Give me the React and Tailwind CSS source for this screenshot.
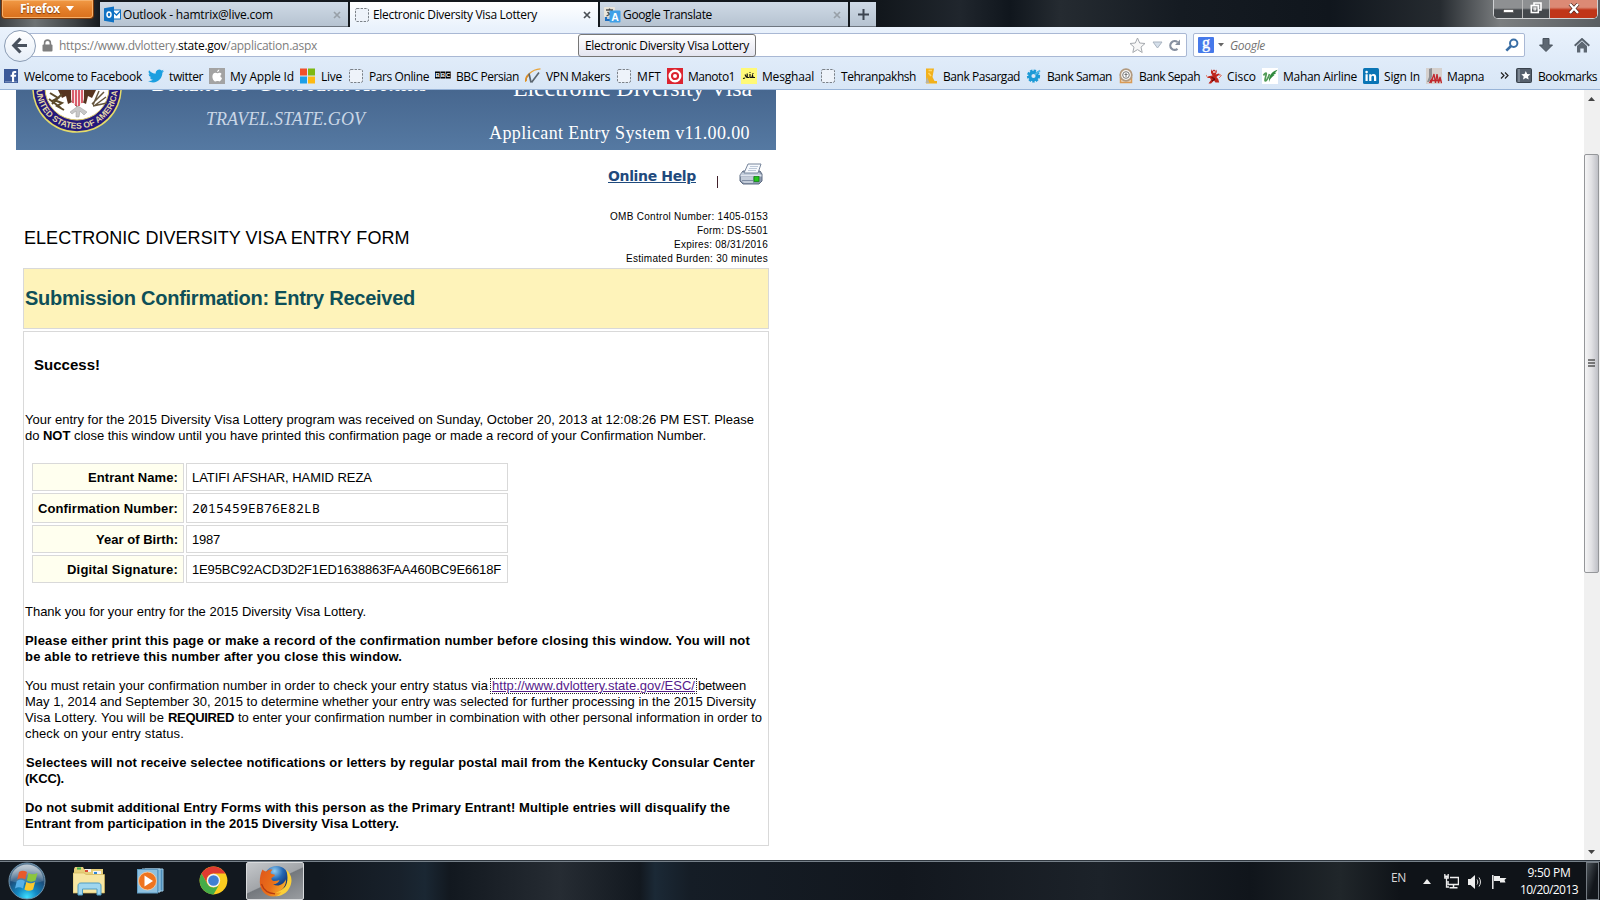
import React, { useLayoutEffect, useRef, useState } from "react";

/* Spreads a line of text over a given width by adjusting its tracking. */
function Fit({ w, className = "", children }) {
  const ref = useRef(null);
  const [ls, setLs] = useState(0);
  useLayoutEffect(() => {
    const el = ref.current;
    const n = el.textContent.length;
    setLs((w - el.getBoundingClientRect().width) / n);
  }, [w]);
  return (
    <span ref={ref} className={"inline-block whitespace-pre " + className} style={{ letterSpacing: ls + "px" }}>
      {children}
    </span>
  );
}

const Dashed = () => (
  <svg width="16" height="16" viewBox="0 0 16 16">
    <rect x="1.5" y="1.5" width="13" height="13" rx="1.5" fill="#eef3fa" stroke="#7b8188" strokeDasharray="2.4 1.2" />
  </svg>
);

const Facebook = () => (
  <svg width="16" height="16" viewBox="0 0 16 16">
    <rect x="1" y="1" width="14" height="14" fill="#3b5998" />
    <rect x="2" y="13" width="12" height="1.4" fill="#6d84b4" />
    <path d="M9 14V8.700H7.600V6.800H9V5.400C9 3.700 10 2.900 11.500 2.900h1.700v2h-1.100c-.7 0-1 .3-1 .9v1h2.100l-.3 1.900h-1.800V14z" fill="#fff" />
  </svg>
);

const Twitter = () => (
  <svg width="16" height="16" viewBox="0 0 24 24">
    <path fill="#1b9fe0" d="M24 4.600a10 10 0 0 1-2.800.8 5 5 0 0 0 2.100-2.700 10 10 0 0 1-3.100 1.200 4.900 4.900 0 0 0-8.400 4.500A14 14 0 0 1 1.700 3.200a4.900 4.900 0 0 0 1.500 6.500 4.900 4.900 0 0 1-2.200-.6 4.900 4.900 0 0 0 3.900 4.900 5 5 0 0 1-2.200.1 4.900 4.900 0 0 0 4.600 3.400A9.900 9.900 0 0 1 0 19.500a14 14 0 0 0 7.500 2.200c9.100 0 14.300-7.700 14-14.600A10 10 0 0 0 24 4.600z" />
  </svg>
);

const Apple = () => (
  <svg width="16" height="16" viewBox="0 0 16 16">
    <rect width="16" height="16" fill="#a3a3a3" />
    <path fill="#fff" d="M10.300 1.500c.1 1.300-.9 2.500-2.200 2.600-.1-1.200 1-2.500 2.200-2.600zM12.600 5.900c-1.700 1-1.600 3.300.4 4.200-.5 1.500-1.500 3.400-2.700 3.400-.8 0-1-.4-1.900-.4s-1.200.4-1.900.4C4.900 13.500 3.400 11 3.400 8.500c0-2.300 1.400-3.700 3-3.700.9 0 1.500.5 2.100.5s1.200-.6 2.300-.6c.7 0 1.400.4 1.800 1.200z" />
  </svg>
);

const Live = () => (
  <svg width="16" height="16" viewBox="0 0 16 16">
    <rect x="0" y="0.500" width="7" height="7" fill="#f0502a" />
    <rect x="8" y="0.500" width="7" height="7" fill="#7db813" />
    <rect x="0" y="8.500" width="7" height="7" fill="#1b9fe8" />
    <rect x="8" y="8.500" width="7" height="7" fill="#fdb913" />
  </svg>
);

const Bbc = () => (
  <svg width="16" height="16" viewBox="0 0 16 16">
    {[0, 5.400, 10.800].map((x) => <rect key={x} x={x} y="3.500" width="4.900" height="7" fill="#000" />)}
    <g fill="#fff" fontFamily="Liberation Sans" fontWeight="700" fontSize="6">
      <text x="0.400" y="9.200">B</text><text x="5.800" y="9.200">B</text><text x="11.100" y="9.200">C</text>
    </g>
  </svg>
);

const Vpn = () => (
  <svg width="16" height="16" viewBox="0 0 16 16" fill="none">
    <path d="M0.500 14C0.500 8 6 1.500 15.500 0.800" stroke="#e8a33a" strokeWidth="1.300" />
    <path d="M1 13c-.3-3 1-5 3-6.500" stroke="#d98d2a" strokeWidth="1.800" />
    <path d="M4 5.500l2 9M6.500 14.500L14 4.500" stroke="#5b6670" strokeWidth="1.700" />
  </svg>
);

const Manoto = () => (
  <svg width="16" height="16" viewBox="0 0 16 16">
    <rect width="16" height="16" fill="#dc2430" />
    <circle cx="8" cy="8" r="5.300" fill="none" stroke="#fff" strokeWidth="2.400" />
    <circle cx="8" cy="8" r="2" fill="#fff" />
  </svg>
);

const Mesghaal = () => (
  <svg width="16" height="16" viewBox="0 0 16 16">
    <rect width="16" height="16" fill="#fff977" />
    <path d="M14 9.500h-2l-.5-2-.6 2H9V6M8 9.500H6.200V5.500M5.500 9.500L4 6.500M2 10.500l2-.5M8.500 4.500h1M11.500 5.500h1" stroke="#111" strokeWidth="1.200" fill="none" />
  </svg>
);

const Pasargad = () => (
  <svg width="16" height="16" viewBox="0 0 16 16">
    <path d="M4 0.500h8l-.5 3-1 5.500 2 4h2.500v2.500H4z" fill="#f2b11c" />
    <path d="M5 9l2.500 6H3.500z" fill="#b9b4a2" /><path d="M6.500 2.500l3.500 0M6.500 5l2.500 3" stroke="#ffd766" strokeWidth="1.500" />
  </svg>
);

const Saman = () => (
  <svg width="16" height="16" viewBox="0 0 16 16">
    <circle cx="7.500" cy="8" r="5.300" fill="none" stroke="#1c9ad6" strokeWidth="2.600" strokeDasharray="2.300 1.200" />
    <circle cx="7.500" cy="8" r="3.700" fill="none" stroke="#1c9ad6" strokeWidth="3.200" />
    <path d="M9 6.500l5-4" stroke="#4fb7e6" strokeWidth="1.800" />
  </svg>
);

const Sepah = () => (
  <svg width="16" height="16" viewBox="0 0 16 16">
    <path d="M2.500 9v5.500h11V9" fill="#f3dcc0" stroke="#d99a55" strokeWidth="1.500" />
    <circle cx="8" cy="7" r="5.800" fill="#f8f5f1" stroke="#b29a7f" strokeWidth="1.800" />
    <circle cx="8" cy="7" r="3.300" fill="#fff" stroke="#777" strokeWidth="1" />
    <path d="M6.500 6.500h3M8 5v4" stroke="#777" />
  </svg>
);

const Cisco = () => (
  <svg width="16" height="16" viewBox="0 0 16 16">
    <path d="M5 1l1 2 2-1.500 2 1.500 1-1.500-.4 3-1 2 3-1 2 2-2-.3-2.200 1.800 1.800 2 1 3.500H9.500L8 12.500 5 15.500H2.500L5 12l-1-2H1l1.500-1.700 4-.8L5 5z" fill="#c0251b" />
    <path d="M7 4h2.500" stroke="#fff" strokeWidth="1.200" /><path d="M5.500 9.500l3 1M6 13l3-2" stroke="#5d0d0b" strokeWidth="1.200" />
    <path d="M13 6l2.500 1.500L13 10M0 7l2 3" stroke="#e07a68" fill="none" />
  </svg>
);

const Mahan = () => (
  <svg width="16" height="16" viewBox="0 0 16 16">
    <rect width="16" height="16" fill="#fff" />
    <path d="M1.500 7.500C2.500 5.500 4 4.500 4.300 5.300c.4 1-1.600 5.500-1.300 7.200.4 1.500 3-1.500 4.500-6.500" fill="none" stroke="#4f9a55" strokeWidth="1.700" />
    <path d="M7 14c-.5-6 2.500-10.500 8.500-12.200-.7 1.500-1.700 2.200-2.900 2.700l1.700.2c-1.300 1.500-2.400 1.900-3.500 2.100l1.700.3C10.500 9 8.500 10 7 14z" fill="#2f8a3d" />
  </svg>
);

const LinkedIn = () => (
  <svg width="16" height="16" viewBox="0 0 16 16">
    <rect width="16" height="16" rx="1.500" fill="#0a75b5" />
    <path d="M2.500 6.200h2.200v6.800H2.500zM3.600 2.800a1.300 1.300 0 1 1 0 2.600 1.300 1.300 0 0 1 0-2.600zM6.200 6.200h2.100v1c.5-.8 1.200-1.200 2.200-1.200 2.200 0 2.700 1.400 2.700 3.300V13H11V9.700c0-.9-.1-1.900-1.200-1.900S8.400 8.700 8.400 9.600V13H6.200z" fill="#fff" />
  </svg>
);

const Mapna = () => (
  <svg width="16" height="16" viewBox="0 0 16 16">
    <rect width="16" height="16" fill="#d5d0cd" />
    <path d="M3 1l3-1v9l-3 5H1l2-5z" fill="#8f8f92" />
    <path d="M5 15l3-9 1.500 9L11 6l1.500 9L14 9l1.500 6M3.500 15L7 9M4 12.500h11" stroke="#c1272d" strokeWidth="1.300" fill="none" />
  </svg>
);

const BOOKMARKS = [
  [Facebook, "Welcome to Facebook", 118], [Twitter, "twitter", 34], [Apple, "My Apple Id", 64],
  [Live, "Live", 21], [Dashed, "Pars Online", 60], [Bbc, "BBC Persian", 63], [Vpn, "VPN Makers", 64],
  [Dashed, "MFT", 24], [Manoto, "Manoto1", 47], [Mesghaal, "Mesghaal", 52], [Dashed, "Tehranpakhsh", 75],
  [Pasargad, "Bank Pasargad", 77], [Saman, "Bank Saman", 65], [Sepah, "Bank Sepah", 61], [Cisco, "Cisco", 29],
  [Mahan, "Mahan Airline", 74], [LinkedIn, "Sign In", 36], [Mapna, "Mapna", 37],
];

const OutlookIcon = () => (
  <svg width="17" height="17" viewBox="0 0 17 17">
    <rect x="8" y="4" width="8.500" height="9" fill="#fff" stroke="#0f72c4" />
    <path d="M8 5l4.500 4L16.500 5" fill="none" stroke="#0f72c4" strokeWidth="1.300" />
    <path d="M0 2.200L10 0.500v16L0 14.800z" fill="#0f72c4" />
    <ellipse cx="5" cy="8.600" rx="2" ry="2.600" fill="none" stroke="#fff" strokeWidth="1.500" />
  </svg>
);

const TranslateIcon = () => (
  <svg width="17" height="16" viewBox="0 0 17 16">
    <rect x="0" y="0" width="11" height="10" rx="1" fill="#e9e5da" />
    <path d="M2 3h7M5.500 1.500V3M8 3C7 6 5 8 2.500 9M3.500 5C5 7 6.500 8 8.500 8.500" stroke="#4d4d4d" strokeWidth="1.300" fill="none" />
    <path d="M1 10v4h5v-2H3v-2z" fill="#1d6fc0" />
    <rect x="5.500" y="3.500" width="11" height="12" rx="1" fill="#3fa0e8" />
    <text x="7.300" y="13.500" fontSize="10.500" fontWeight="700" fontFamily="Liberation Sans" fill="#fff">A</text>
  </svg>
);

const Close = ({ color }) => (
  <svg width="8" height="8" viewBox="0 0 8 8"><path d="M1 1l6 6M7 1L1 7" stroke={color} strokeWidth="1.700" /></svg>
);

function Tab({ icon, title, w, active, className }) {
  return (
    <div className={"flex h-[25px] items-center pl-1 pr-[7px] pt-px text-[12px] text-black " + (active ? "bg-gradient-to-b from-white to-[#eaf2fc] " : "border-b border-[#6e7680] bg-gradient-to-b from-[#cfdae6] to-[#b6c3d1] ") + className}>
      <span className="flex w-[19px] shrink-0">{icon}</span>
      <Fit w={w}>{title}</Fit>
      <span className="ml-auto"><Close color={active ? "#4a4f55" : "#98a0a8"} /></span>
    </div>
  );
}

function TabStrip() {
  return (
    <div className="flex h-[27px] items-start bg-[linear-gradient(90deg,#3c3f42_0,#6d7274_35px,#3d4144_75px,#15191e_100px,#12171c_880px,#20262d_960px,#10161d_1010px,#252b31_1060px,#151b22_1180px,#10161d_1330px,#262b30_1440px,#7b7e80_1500px,#5a5e62_1600px)]">
      <div className="ml-px flex h-[19px] w-[93px] items-center rounded-b-[4px] border border-t-0 border-[#7c3a0b] bg-gradient-to-b from-[#f19a45] via-[#e4802b] to-[#d9701c] pb-px pl-[18px] font-bold text-white shadow-[inset_0_0_0_1px_#f6b16b]">
        <Fit w={40} className="text-[12px] leading-4 [text-shadow:0_1px_1px_#7c3a0b]">Firefox</Fit>
        <svg className="ml-[6px]" width="8" height="5" viewBox="0 0 8 5"><path d="M0 0h8L4 5z" fill="#fff" /></svg>
      </div>
      <div className="ml-[6px] mt-[2px] flex gap-[2px]">
        <Tab className="w-[248px]" icon={<OutlookIcon />} title="Outlook - hamtrix@live.com" w={150} />
        <Tab active className="w-[248px]" icon={<Dashed />} title="Electronic Diversity Visa Lottery" w={164} />
        <Tab className="w-[248px]" icon={<TranslateIcon />} title="Google Translate" w={89} />
        <div className="flex h-[25px] w-[26px] items-center justify-center border-b border-[#6e7680] bg-gradient-to-b from-[#cfdae6] to-[#b6c3d1]">
          <svg className="mt-px" width="11" height="11" viewBox="0 0 11 11"><path d="M5.500 0v11M0 5.500h11" stroke="#3d4550" strokeWidth="2" /></svg>
        </div>
      </div>
      <div className="ml-auto mr-[2px] flex h-[19px] w-[105px] overflow-hidden rounded-b-[5px] border border-t-0 border-[#d0d2d4] bg-[#222]">
        <div className="flex w-[29px] items-end justify-center border-r border-[#bbb] bg-gradient-to-b from-[#8e9092] from-45% to-[#44484c] to-55% pb-[5px]">
          <svg width="11" height="4"><rect x="0.500" y="0.500" width="10" height="3" fill="#fff" stroke="#444" strokeWidth=".6" /></svg>
        </div>
        <div className="flex w-[27px] items-center justify-center border-r border-[#bbb] bg-gradient-to-b from-[#8e9092] from-45% to-[#44484c] to-55% pb-[2px]">
          <svg width="12" height="12" viewBox="0 0 12 12" fill="none" stroke="#fff" strokeWidth="1.600"><path d="M4 3V1h7v7H9" /><rect x="1.300" y="3.500" width="7" height="7" /><rect x="4" y="6" width="1.800" height="2" strokeWidth="1" /></svg>
        </div>
        <div className="flex grow items-center justify-center bg-gradient-to-b from-[#dc8a75] from-40% to-[#c03518] to-55% pb-[2px]">
          <svg width="12" height="11" viewBox="0 0 12 11"><path d="M2 1l8 9M10 1L2 10" stroke="#4a2018" strokeWidth="3.600" /><path d="M2 1l8 9M10 1L2 10" stroke="#fff" strokeWidth="2.400" /></svg>
        </div>
      </div>
    </div>
  );
}

function NavBar() {
  return (
    <div className="relative flex h-[35px] items-center bg-gradient-to-b from-[#eaf2fc] to-[#dfebf9] text-[12px]">
      <div className="z-10 ml-1 mt-[2px] flex h-8 w-8 shrink-0 items-center justify-center rounded-full border border-[#8b9cb4] bg-gradient-to-b from-white to-[#e6eef8]">
        <svg className="-ml-px" width="17" height="17" viewBox="0 0 17 17" fill="none" stroke="#49525e" strokeWidth="3.200"><path d="M9.500 1.500L2.800 8.500l6.700 7M3 8.500h13" /></svg>
      </div>
      <div className="-ml-2 mt-px flex h-6 w-[1159px] items-center rounded-r-[2px] border border-[#a9b8d4] bg-white pl-[13px] pr-[5px] text-[#7d7d7d]">
        <svg width="11" height="13" viewBox="0 0 11 13"><path d="M2.600 6V4a2.900 2.900 0 0 1 5.800 0v2" fill="none" stroke="#7e7e7e" strokeWidth="1.600" /><rect x="0.500" y="5.500" width="10" height="7" rx="1" fill="#7e7e7e" /></svg>
        <Fit w={258} className="ml-[6px] mt-[2px]">https://www.dvlottery.<span className="text-black">state.gov</span>/application.aspx</Fit>
        <div className="ml-auto flex items-center">
          <svg width="17" height="17" viewBox="0 0 17 17"><path d="M8.500 1l2.200 5 5.300.5-4 3.600 1.200 5.400-4.700-2.900-4.700 2.900L5 10.100 1 6.500 6.300 6z" fill="#f7f7f7" stroke="#a5a9ae" /></svg>
          <svg className="ml-[6px]" width="11" height="8" viewBox="0 0 11 8"><path d="M1 1h9L5.500 7z" fill="#d5dfea" stroke="#aab4c0" /></svg>
          <svg className="ml-[5px]" width="13" height="13" viewBox="0 0 13 13"><path d="M9.500 9.800A4.400 4.400 0 1 1 9.500 3" fill="none" stroke="#8790a0" strokeWidth="2.200" /><path d="M7 6h5V0.500z" fill="#8790a0" /></svg>
        </div>
      </div>
      <div className="ml-[6px] mt-px flex h-6 w-[332px] items-center rounded-[2px] border border-[#a9b8d4] bg-white pl-1 pr-[5px]">
        <svg width="16" height="16" viewBox="0 0 16 16"><rect width="16" height="16" rx="1" fill="#4679ea" /><text x="4" y="11" fontFamily="Liberation Serif" fontSize="16" fill="#fff" stroke="#fff" strokeWidth=".4">g</text></svg>
        <svg className="ml-1" width="6" height="4" viewBox="0 0 6 4"><path d="M0 0h6L3 3.500z" fill="#666" /></svg>
        <Fit w={35} className="ml-[6px] mt-[2px] italic text-[#737373]">Google</Fit>
        <svg className="ml-auto" width="14" height="14" viewBox="0 0 14 14" fill="none"><circle cx="8.700" cy="5.200" r="3.700" stroke="#3a6ea5" strokeWidth="2" /><path d="M6 8L1.300 12.700" stroke="#3a6ea5" strokeWidth="2.600" /></svg>
      </div>
      <svg className="ml-[14px] mt-px" width="14" height="14" viewBox="0 0 14 14"><path d="M4 .5h6v6.500h3.500L7 13.500.5 7H4z" fill="#5d6772" stroke="#49525d" /></svg>
      <svg className="ml-[21px] mt-px" width="16" height="15" viewBox="0 0 16 15"><path d="M.7 7.800L8 1l7.300 6.800" fill="none" stroke="#56606b" strokeWidth="1.900" /><path d="M3 8l5-4.700L13 8v6.500H9.700v-4H6.300v4H3z" fill="#5d6772" /></svg>
      <div className="absolute left-[578px] top-[7px] z-20 flex h-[23px] w-[178px] items-center rounded-[3px] border border-[#767676] bg-gradient-to-b from-white to-[#e4e5f0] pl-[6px] pt-px">
        <Fit w={164}>Electronic Diversity Visa Lottery</Fit>
      </div>
    </div>
  );
}

function BookmarksBar() {
  return (
    <div className="flex h-[28px] items-center gap-[6px] border-b border-[#98b4d8] bg-gradient-to-b from-[#dfebf9] to-[#d8e6f6] pl-[3px] text-[12px] text-black">
      {BOOKMARKS.map(([Icon, label, w]) => (
        <div key={label} className="flex items-center gap-[5px]">
          <Icon />
          <Fit w={w} className="mt-[2px]">{label}</Fit>
        </div>
      ))}
      <svg className="ml-[10px]" width="9" height="7" viewBox="0 0 9 7" fill="none" stroke="#222" strokeWidth="1.200"><path d="M1 .5l3 3-3 3M5 .5l3 3-3 3" /></svg>
      <div className="ml-[1px] flex items-center gap-[6px]">
        <svg width="16" height="15" viewBox="0 0 16 15"><rect x=".5" y=".5" width="15" height="14" rx="1" fill="#56606d" stroke="#39424d" /><rect x="2" y="1" width="2" height="13" fill="#7c8692" /><path d="M9.800 3l1.400 3 3.200.3-2.400 2.100.7 3.200-2.900-1.700-2.800 1.700.7-3.200-2.400-2.100L8.500 6z" fill="#fff" /></svg>
        <Fit w={59} className="mt-[2px]">Bookmarks</Fit>
      </div>
    </div>
  );
}

const Seal = () => (
  <svg className="shrink-0" width="92" height="60" viewBox="31 90 92 60">
    <circle cx="77" cy="88" r="44.800" fill="#e6dc6a" />
    <circle cx="77" cy="88" r="43.300" fill="#24197c" />
    <circle cx="77" cy="88" r="32" fill="#fff" stroke="#d8c766" strokeWidth="1" />
    <path id="sealArc" d="M36.300 88A40.700 40.700 0 0 0 117.700 88" fill="none" />
    <text fontFamily="Liberation Sans" fontWeight="700" fontSize="8.500" fill="#e3d8a8">
      <textPath href="#sealArc" startOffset="2" textLength="123">UNITED STATES OF AMERICA</textPath>
    </text>
    <path d="M58 90h38l-4 8-4-2-2 8-4-2-5 5-5-5-4 2-2-8-4 2z" fill="#55331f" />
    <path d="M71 90h13v8c0 5-3 7-6.500 8-3.500-1-6.500-3-6.500-8z" fill="#f7e9ea" />
    <path d="M73 90v13M76 90v16M79 90v16M82 90v13" stroke="#cf3346" strokeWidth="1.500" />
    <path d="M78 106l-8 6 2 2 4-3 0 6 3 0 1-6 4 4 3-3z" fill="#c8c8c8" stroke="#999" strokeWidth=".5" />
    <path d="M50 93l8 5-4 2 8 3-5 3 7 4M52 104l10-10M49 99l12 9" stroke="#5c4a2a" strokeWidth="2" fill="none" />
    <path d="M104 92l-12 12M106 97l-12 9M99 91l-6 14M107 103l-14 3" stroke="#66573f" strokeWidth="1.500" fill="none" />
  </svg>
);

const Banner = () => (
  <div className="relative ml-4 h-[60px] w-[760px] overflow-hidden bg-gradient-to-b from-[#47678f] to-[#5579a2] font-['Liberation_Serif',serif] text-white">
    <div className="flex">
      <div className="ml-[15px]"><Seal /></div>
    </div>
    <div className="absolute left-[136px] top-[-16px] leading-[20px]">
      <Fit w={276} className="text-[20px] font-bold [font-variant:small-caps]">Bureau of Consular Affairs</Fit>
    </div>
    <div className="absolute left-[190px] top-[17px] leading-[24px] text-[#c9d6e6]">
      <Fit w={159} className="text-[18px] italic">TRAVEL.STATE.GOV</Fit>
    </div>
    <div className="absolute left-[497px] top-[-15px] leading-[26px]">
      <Fit w={239} className="text-[24px]">Electronic Diversity Visa</Fit>
    </div>
    <div className="absolute left-[473px] top-[31px] leading-[24px]">
      <Fit w={261} className="text-[18px]">Applicant Entry System v11.00.00</Fit>
    </div>
  </div>
);

const Printer = () => (
  <svg width="24" height="22" viewBox="0 0 24 22">
    <path d="M4 8L1 12v6l3 3h16l3-3v-7l-2-3z" fill="#8b98ad" stroke="#5f6c82" />
    <path d="M1.500 12.500h21" stroke="#dfe5ee" strokeWidth="2" />
    <path d="M3 9.500h17l2 2.500H1.500z" fill="#c3cddb" />
    <path d="M9 1h13l-3 9H5z" fill="#f6f9fd" stroke="#77859b" />
    <path d="M11 3.500h8M10 5.500h8M9 7.500h8" stroke="#bcc8d8" />
    <path d="M2 14h12v6H5l-3-2.500z" fill="#c3ccd9" />
    <path d="M3 17.500h11" stroke="#8290a6" />
    <rect x="15" y="13.500" width="5" height="5" fill="#25c51c" stroke="#0d7c10" strokeWidth=".7" />
  </svg>
);

const ROWS = [
  ["Entrant Name:", 90, "LATIFI AFSHAR, HAMID REZA", 180, "h-[28px]", ""],
  ["Confirmation Number:", 140, "2015459EB76E82LB", 128, "h-[30px]", "-mt-[2px] font-['Noto_Sans_Mono','DejaVu_Sans_Mono',monospace] text-[13px]"],
  ["Year of Birth:", 82, "1987", 28, "h-[28px]", ""],
  ["Digital Signature:", 111, "1E95BC92ACD3D2F1ED1638863FAA460BC9E6618F", 309, "h-[28px]", ""],
];

function EntryPage() {
  return (
    <div className="flex h-[770px] overflow-hidden bg-white text-black">
      <div className="w-[1584px]">
        <Banner />
        <div className="flex h-[54px] w-[776px] justify-end pr-[13px]">
          <Fit w={88} className="mt-[16px] font-['DejaVu_Sans',sans-serif] text-[14px] font-bold leading-[20px] text-[#1f4a7d] underline">Online Help</Fit>
          <span className="ml-[21px] mt-[26px] h-3 w-px bg-[#40202a]" />
          <span className="ml-[21px] mt-[13px]"><Printer /></span>
        </div>
        <div className="flex h-[64px] w-[768px] justify-between pl-6 font-['Liberation_Sans',Arial,sans-serif]">
          <Fit w={385.5} className="mt-[23px] text-[18px] leading-[22px]">ELECTRONIC DIVERSITY VISA ENTRY FORM</Fit>
          <div className="mt-[6px] flex flex-col items-end text-[10px] leading-[14px]">
            <Fit w={158}>OMB Control Number: 1405-0153</Fit>
            <Fit w={71}>Form: DS-5501</Fit>
            <Fit w={94}>Expires: 08/31/2016</Fit>
            <Fit w={142}>Estimated Burden: 30 minutes</Fit>
          </div>
        </div>
        <div className="ml-[23px] flex h-[61px] w-[746px] items-center border border-[#d9d9d9] bg-[#fef3ba] pb-[2px] pl-px font-['Liberation_Sans',Arial,sans-serif] text-[20px] font-bold leading-6 text-[#0e4f58]">
          <Fit w={390}>Submission Confirmation: Entry Received</Fit>
        </div>
        <div className="ml-[23px] mt-[2px] flex h-[515px] w-[746px] flex-col items-start border border-[#d9d9d9] pl-px font-['Liberation_Sans',Arial,sans-serif] text-[13px] leading-[16px]">
          <Fit w={66} className="ml-[9px] mt-[24px] text-[15px] font-bold leading-[18px]">Success!</Fit>
          <div className="mt-[38px] flex flex-col items-start">
            <Fit w={729}>Your entry for the 2015 Diversity Visa Lottery program was received on Sunday, October 20, 2013 at 12:08:26 PM EST. Please</Fit>
            <Fit w={681}>do <b>NOT</b> close this window until you have printed this confirmation page or made a record of your Confirmation Number.</Fit>
          </div>
          <div className="ml-[7px] mt-[19px] flex flex-col gap-[2px]">
            {ROWS.map(([label, lw, value, vw, h, font]) => (
              <div key={label} className={"flex gap-[2px] " + h}>
                <div className="flex w-[152px] items-center justify-end border border-[#d9d9d9] bg-[#ffffef] pr-[5px] pt-[2px] font-bold"><Fit w={lw}>{label}</Fit></div>
                <div className="flex w-[322px] items-center border border-[#d9d9d9] pl-[5px] pt-[2px]"><Fit w={vw} className={font}>{value}</Fit></div>
              </div>
            ))}
          </div>
          <Fit w={341} className="mt-[21px]">Thank you for your entry for the 2015 Diversity Visa Lottery.</Fit>
          <div className="mt-[13px] flex flex-col items-start font-bold">
            <Fit w={725}>Please either print this page or make a record of the confirmation number before closing this window. You will not</Fit>
            <Fit w={377}>be able to retrieve this number after you close this window.</Fit>
          </div>
          <div className="mt-[13px] flex flex-col items-start">
            <div className="flex h-4">
              <Fit w={463}>You must retain your confirmation number in order to check your entry status via</Fit>
              <span className="ml-[2px] h-4 border border-dotted border-[#222] px-px leading-[14px] text-[#551a8b]"><Fit w={203} className="underline">http://www.dvlottery.state.gov/ESC/</Fit></span>
              <Fit w={48} className="ml-px">between</Fit>
            </div>
            <Fit w={731}>May 1, 2014 and September 30, 2015 to determine whether your entry was selected for further processing in the 2015 Diversity</Fit>
            <div className="flex">
              <Fit w={139}>Visa Lottery. You will be</Fit>
              <Fit w={66} className="ml-1 font-bold">REQUIRED</Fit>
              <Fit w={524} className="ml-1">to enter your confirmation number in combination with other personal information in order to</Fit>
            </div>
            <Fit w={159}>check on your entry status.</Fit>
          </div>
          <div className="mt-[13px] flex flex-col items-start font-bold">
            <Fit w={729} className="ml-px">Selectees will not receive selectee notifications or letters by regular postal mail from the Kentucky Consular Center</Fit>
            <Fit w={39}>(KCC).</Fit>
          </div>
          <div className="mt-[13px] flex flex-col items-start font-bold">
            <Fit w={705}>Do not submit additional Entry Forms with this person as the Primary Entrant! Multiple entries will disqualify the</Fit>
            <Fit w={374}>Entrant from participation in the 2015 Diversity Visa Lottery.</Fit>
          </div>
        </div>
      </div>
      <div className="flex w-4 flex-col items-center bg-[#f0f0f0] pr-px">
        <svg className="mt-[7px]" width="7" height="4" viewBox="0 0 7 4"><path d="M0 4h7L3.500 0z" fill="#444" /></svg>
        <div className="mt-[53px] flex h-[419px] w-[15px] items-center justify-center rounded-[2px] border border-[#95979a] bg-gradient-to-r from-[#f5f5f6] via-[#e1e1e4] to-[#bfc0c6]">
          <svg className="-mt-px" width="7" height="8" viewBox="0 0 7 8"><path d="M0 1h7M0 4h7M0 7h7" stroke="#555" strokeWidth="1.300" /></svg>
        </div>
        <svg className="mb-[6px] mt-auto" width="7" height="4" viewBox="0 0 7 4"><path d="M0 0h7L3.500 4z" fill="#444" /></svg>
      </div>
    </div>
  );
}

const StartOrb = () => (
  <svg width="38" height="38" viewBox="0 0 38 38">
    <defs>
      <radialGradient id="orb" cx=".5" cy=".95" r=".8"><stop offset="0" stopColor="#3fe0ff" /><stop offset=".35" stopColor="#1389c4" /><stop offset=".75" stopColor="#1c4d7a" /><stop offset="1" stopColor="#55748e" /></radialGradient>
      <linearGradient id="orbTop" x1="0" y1="0" x2="0" y2="1"><stop offset="0" stopColor="#fff" stopOpacity=".65" /><stop offset="1" stopColor="#fff" stopOpacity=".1" /></linearGradient>
    </defs>
    <circle cx="19" cy="19" r="18" fill="url(#orb)" stroke="#6f93ac" />
    <path d="M2.500 19a16.500 16.500 0 0 1 33 0c-8 3-24 3-33 0z" fill="url(#orbTop)" />
    <path d="M11 10c2.500-1.800 5-1.800 8 0l-1.800 7.500c-2.700-1.700-5-1.700-8 0z" fill="#e8592b" />
    <path d="M20.500 11c3 1.600 5.500 1.600 9 0l-2 7.500c-3 1.600-5.800 1.500-8.700 0z" fill="#8cc63e" />
    <path d="M8.800 19c2.700-1.700 5.300-1.600 8 0L15 26.500c-3-1.700-5.200-1.700-8 0z" fill="#57b0e8" />
    <path d="M18.300 20c3 1.700 5.800 1.600 8.800 0l-2 7.500c-3 1.700-5.800 1.600-8.700 0z" fill="#fcc92d" />
  </svg>
);

const Explorer = () => (
  <svg width="32" height="30" viewBox="0 0 32 30">
    <path d="M1 3l1-2h8l1 2h19v24H1z" fill="#e7cf7a" />
    <rect x="4" y="1.500" width="4" height="2" fill="#3eb34a" /><rect x="12" y="3" width="6" height="3" fill="#f3f3f3" /><rect x="12" y="4" width="3" height="2" fill="#d94b34" /><rect x="20" y="5" width="8" height="3" fill="#f3f3f3" /><rect x="21" y="6" width="3" height="2" fill="#2f87d4" />
    <path d="M0 7h11l2 1.500h18.500V27H0z" fill="#f7e6a2" stroke="#d2b65c" strokeWidth=".7" />
    <path d="M5 29V20c0-2 1-3 3-3h17c2 0 3 1 3 3v9h-4v-6H9.500v6z" fill="#9fd6ef" stroke="#4e9cc4" />
  </svg>
);

const MediaPlayer = () => (
  <svg width="27" height="26" viewBox="0 0 27 26">
    <path d="M8 1h18v22H8z" fill="#4d8db9" stroke="#9cc9e5" /><path d="M5 1h18v23H5z" fill="#6ba7cf" stroke="#a8d1ea" />
    <rect x=".5" y="1.500" width="20" height="23.500" fill="#8fc1e0" stroke="#5f9cc4" />
    <circle cx="10.500" cy="13" r="9" fill="#ee7420" stroke="#fbd1a5" strokeWidth=".8" />
    <path d="M7.500 7.500v11l8.500-5.500z" fill="#fff" />
  </svg>
);

const Chrome = () => (
  <svg width="29" height="29" viewBox="0 0 48 48">
    <circle cx="24" cy="24" r="23" fill="#fbcc1f" />
    <path d="M4.100 12.500A23 23 0 0 1 43.900 12.500H24A11.500 11.500 0 0 0 14 29.700z" fill="#df3b30" />
    <path d="M4.100 12.500A23 23 0 0 0 24 47L34 29.700A11.500 11.500 0 0 1 14 29.700z" fill="#45ac48" />
    <circle cx="24" cy="24" r="11" fill="#f3f3f3" /><circle cx="24" cy="24" r="8.800" fill="#3f7fd2" />
  </svg>
);

const FirefoxIcon = () => (
  <svg width="33" height="32" viewBox="0 0 33 32">
    <defs>
      <radialGradient id="globe" cx=".42" cy=".2" r=".75"><stop offset="0" stopColor="#8fcdf2" /><stop offset=".45" stopColor="#2468b4" /><stop offset="1" stopColor="#0f2560" /></radialGradient>
      <linearGradient id="fox" x1="0" y1="0" x2="1" y2=".5"><stop offset="0" stopColor="#e0561a" /><stop offset=".6" stopColor="#e9701a" /><stop offset="1" stopColor="#f7a928" /></linearGradient>
    </defs>
    <circle cx="17.500" cy="13.500" r="12.500" fill="url(#globe)" />
    <path d="M27 4.500c4.500 3.500 6.500 9 5 14.500-1.800 7-7.500 12-15 12.300l-1-4.800c6-.3 10.500-3.500 11.800-8.500 1.200-4.700.7-9-.8-13.500z" fill="#fbcf38" />
    <path d="M3.500 4.500c1 1 2 1.900 3.800 2C9.500 4.800 11.500 4.300 13.500 4.800c-1.700 1.300-2.300 2.600-1.700 3.600 1 .9 3.400.5 4.200 1.600-.5 1.600-3 2-3.700 3.500.6 3.500 5 2.700 8.200 1.500-.8 2.800-3.500 4.300-6.500 4.200 5 2.900 10.500.5 13-5 .5 6-3.500 12-10.500 13.500-1 0 4 0 6-.8-2 3-5 4.600-8.500 4.600C7 31.500.8 25.500.8 17 .8 12 1.700 8 3.500 4.500z" fill="url(#fox)" />
    <path d="M2.500 19c2 6 7 9.500 13.500 9.800" stroke="#b63c12" strokeWidth="1.300" fill="none" />
  </svg>
);

function Taskbar() {
  return (
    <div className="flex h-10 items-center border-t border-[#303840] bg-[linear-gradient(90deg,#12181f_0,#12181f_320px,#18212b_400px,#1a2733_425px,#12181f_450px,#262c33_560px,#12181f_640px,#1b2936_655px,#151d26_690px,#12171e_900px,#1c2229_1100px,#10151b_1250px,#20262a_1340px,#0f1318_1400px)] text-white shadow-[inset_0_1px_0_#77818a]">
      <div className="ml-2"><StartOrb /></div>
      <div className="ml-[27px]"><Explorer /></div>
      <div className="ml-[32px]"><MediaPlayer /></div>
      <div className="ml-[35px]"><Chrome /></div>
      <div className="ml-[18px] flex h-[38px] w-[58px] items-center justify-center rounded-[2px] border border-[#d9dbdd] bg-[linear-gradient(155deg,#c5c8cb_0,#a2a5a9_48%,#74787d_50%,#9a9da1_100%)]"><FirefoxIcon /></div>
      <div className="ml-auto flex h-full items-center">
        <Fit w={15} className="mb-[5px] text-[12px] text-[#d8d8d8]">EN</Fit>
        <svg className="ml-[17px] mt-[2px]" width="8" height="5" viewBox="0 0 8 5"><path d="M0 5h8L4 0z" fill="#eee" /></svg>
        <svg className="ml-[13px] mt-[2px]" width="15" height="15" viewBox="0 0 15 15" fill="none" stroke="#eee"><path d="M6 3.500h8.500v7H4V7M9.500 11v2.500M5.500 13.700h8" strokeWidth="1.500" /><path d="M.8 0v4h3.400V0M2.500 4v9H5" strokeWidth="1.300" /><path d="M1 2.500h3" strokeWidth="2" /></svg>
        <svg className="ml-[9px] mt-[2px]" width="15" height="14" viewBox="0 0 15 14"><path d="M0 4h2.500L7 0v14L2.500 10H0z" fill="#eee" /><path d="M9 4.500c1 1.500 1 3.500 0 5M11 2.500c2 3 2 6 0 9" stroke="#ddd" fill="none" /></svg>
        <svg className="ml-[9px] mt-[2px]" width="15" height="14" viewBox="0 0 15 14"><path d="M.8 0v14" stroke="#eee" strokeWidth="1.500" /><path d="M2 1h6v2h6.500l-2 2 1 2.500H8V6H2z" fill="#eee" /></svg>
        <div className="ml-[13px] flex w-[58px] flex-col items-center text-[12px] leading-[17px]">
          <Fit w={43}>9:50 PM</Fit>
          <Fit w={58}>10/20/2013</Fit>
        </div>
        <div className="ml-[8px] mr-px mt-px h-[38px] w-[13px] border border-[#747b82] bg-gradient-to-br from-[#4c5359] to-[#12161b] to-60%" />
      </div>
    </div>
  );
}

export default function App() {
  return (
    <div className="h-[900px] w-[1600px] overflow-hidden bg-white font-['Open_Sans','Noto_Sans',sans-serif] leading-4">
      <TabStrip />
      <NavBar />
      <BookmarksBar />
      <EntryPage />
      <Taskbar />
    </div>
  );
}
